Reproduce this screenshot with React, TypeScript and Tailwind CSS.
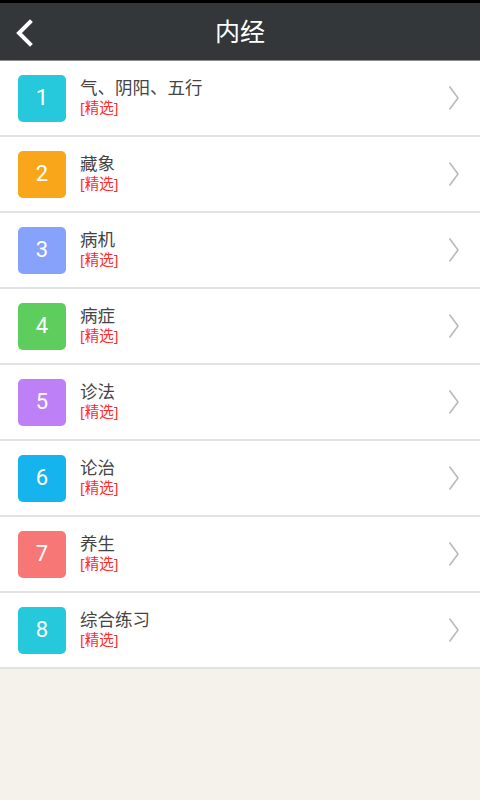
import React from "react";

const items = [
  { n: 1, t: "气、阴阳、五行", c: "bg-[#26c8dc]" },
  { n: 2, t: "藏象", c: "bg-[#f9a61a]" },
  { n: 3, t: "病机", c: "bg-[#86a2fb]" },
  { n: 4, t: "病症", c: "bg-[#5dcd5e]" },
  { n: 5, t: "诊法", c: "bg-[#bd80f7]" },
  { n: 6, t: "论治", c: "bg-[#16b4ee]" },
  { n: 7, t: "养生", c: "bg-[#f77676]" },
  { n: 8, t: "综合练习", c: "bg-[#26c8dc]" },
];

const font = { fontFamily: '"Noto Sans", "Noto Sans CJK SC", sans-serif' };

export default function App() {
  return (
    <div className="w-[480px] h-[800px] bg-[#f5f2eb] flex flex-col" style={font}>
      <div className="h-[3px] bg-black" />
      <div className="h-[58px] bg-[#33373a] border-b border-[#8a8d8f] flex items-center relative">
        <svg className="absolute left-[14px] top-[16px]" width="20" height="28" viewBox="0 0 20 28">
          <path d="M16 3 L5 14 L16 25" fill="none" stroke="white" strokeWidth="4" strokeLinecap="square" />
        </svg>
        <div className="flex-1 text-center text-white text-[25px] leading-none">内经</div>
      </div>
      <div className="flex flex-col">
        {items.map((it) => (
          <div key={it.n} className="h-[76px] bg-white border-b-2 border-[#e2e2e2] flex items-center pl-[18px] pr-[20px]">
            <div className={`w-[48px] h-[47px] rounded-[5px] ${it.c} flex items-center justify-center text-white text-[22px] leading-none`} style={{ fontFamily: '"Roboto", sans-serif' }}>
              {it.n}
            </div>
            <div className="flex-1 ml-[14px] pb-[4px] flex flex-col">
              <div className="text-[17.5px] leading-[21px] text-[#444]">{it.t}</div>
              <div className="text-[14.5px] leading-[18px] text-[#ff2a2a]">[精选]</div>
            </div>
            <svg width="12" height="26" viewBox="0 0 12 26">
              <path d="M1.5 1.5 L10 13 L1.5 24.5" fill="none" stroke="#b9b9b9" strokeWidth="1.6" />
            </svg>
          </div>
        ))}
      </div>
    </div>
  );
}
